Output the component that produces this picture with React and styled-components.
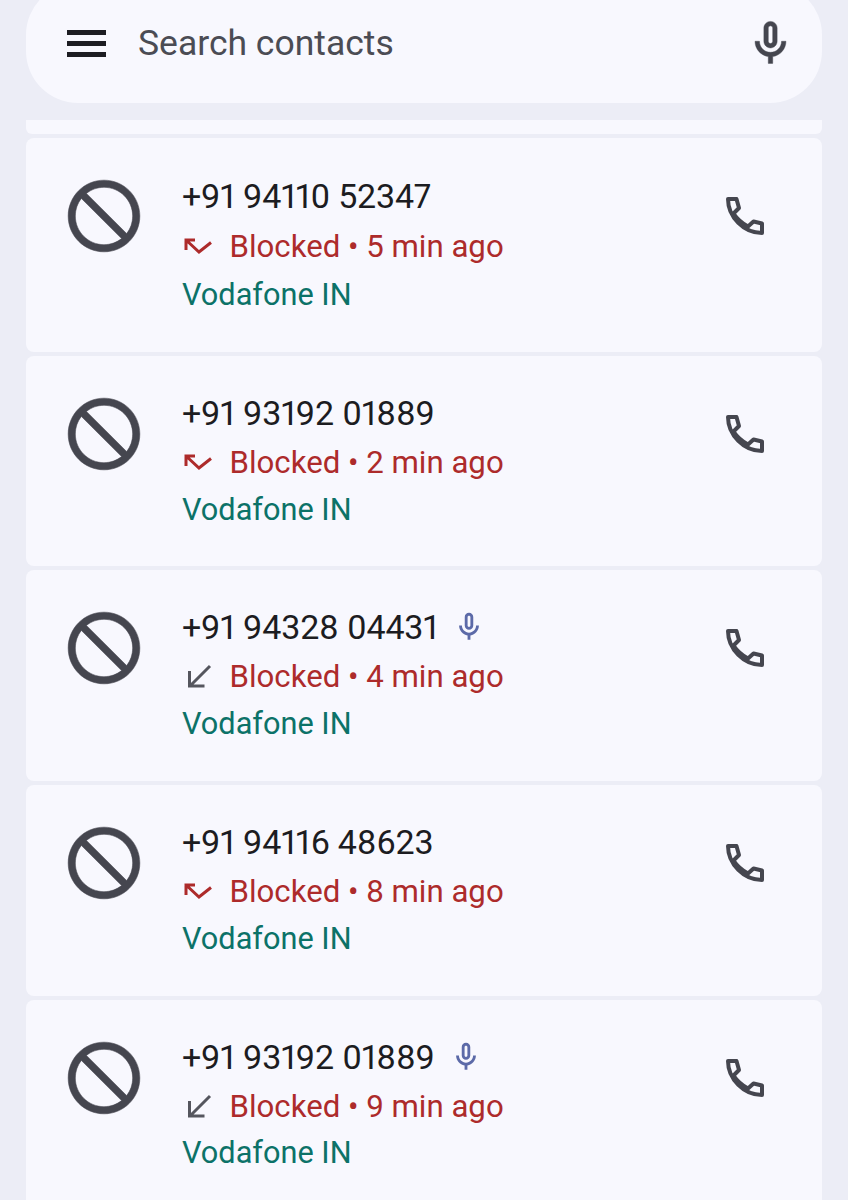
import React from "react"
import styled, { createGlobalStyle } from "styled-components"

const GlobalStyle = createGlobalStyle`
  html, body {
    margin: 0;
    background: #ecedf6;
    overflow: hidden;
  }
  body {
    font-family: Roboto, "Liberation Sans", sans-serif;
  }
`

const MIC = "M12 14c1.66 0 3-1.34 3-3V5c0-1.66-1.34-3-3-3S9 3.34 9 5v6c0 1.66 1.34 3 3 3zm-1-9c0-.55.45-1 1-1s1 .45 1 1v6c0 .55-.45 1-1 1s-1-.45-1-1V5zm6 6c0 2.76-2.24 5-5 5s-5-2.24-5-5H5c0 3.53 2.61 6.43 6 6.92V21h2v-3.08c3.39-.49 6-3.39 6-6.92h-2z"
const BLOCK = "M12 2C6.48 2 2 6.48 2 12s4.48 10 10 10 10-4.48 10-10S17.52 2 12 2zM4 12c0-4.42 3.58-8 8-8 1.85 0 3.55.63 4.9 1.69L5.69 16.9C4.63 15.55 4 13.85 4 12zm8 8c-1.85 0-3.55-.63-4.9-1.69L18.31 7.1C19.37 8.45 20 10.15 20 12c0 4.42-3.58 8-8 8z"

const calls = [
  { number: "+91 94110 52347", time: "5 min ago", height: 214, offset: 0, drop: 2, rise: 0 },
  { number: "+91 93192 01889", time: "2 min ago", height: 210, offset: -1, drop: 1, rise: 1 },
  { number: "+91 94328 04431", time: "4 min ago", height: 211, offset: -1, drop: 1, rise: 1, incoming: true, voicemail: true },
  { number: "+91 94116 48623", time: "8 min ago", height: 211, offset: -1, drop: 1, rise: 1 },
  { number: "+91 93192 01889", time: "9 min ago", height: 211, offset: -1, drop: 1, rise: 2, incoming: true, voicemail: true },
]

const Icon = ({ d, size, color, weight = 0 }) => (
  <svg width={size} height={size} viewBox="0 0 24 24" fill={color} stroke={color} strokeWidth={weight}>
    <path d={d} />
  </svg>
)

const Handset = () => (
  <svg width="42" height="42" viewBox="0 0 42 42" fill="none">
    <path
      d="M4 4 H12.5 L15 13 L9.5 18.5 Q14.5 26 24 31.5 L29.5 26.5 L38 28.5 V38 C20 38 4 22 4 4 Z"
      stroke="#45464f"
      strokeWidth="4"
      strokeLinejoin="round"
    />
  </svg>
)

// the red missed-call arrow, or the grey incoming one
const CallArrow = ({ incoming }) => (
  <svg width="34" height="30" viewBox="0 0 34 30" fill="none">
    {incoming ? (
      <path d="M28 4 L8 24 M7.5 9 V24 H22.5" stroke="#55565e" strokeWidth="3" />
    ) : (
      <path d="M3.5 7.5 L17 20 L29 10.5 M4 18 V8 H13" stroke="#ad2b2b" strokeWidth="3" />
    )}
  </svg>
)

const App = () => {
  return (
    <Page>
      <GlobalStyle />
      <SearchBar>
        <Burger>
          <span />
          <span />
          <span />
        </Burger>
        <SearchText>Search contacts</SearchText>
        <Icon d={MIC} size={53} color="#45464f" weight={0.2} />
      </SearchBar>
      <List>
        <Sliver />
        {calls.map((call, i) => (
          <Card key={i} $height={call.height}>
            <BlockSlot>
              <Icon d={BLOCK} size={86} color="#45464f" weight={0.15} />
            </BlockSlot>
            <Details $offset={call.offset}>
              <Number>
                {call.number}
                {call.voicemail && (
                  <VoicemailSlot>
                    <Icon d={MIC} size={34} color="#5c6aa8" />
                  </VoicemailSlot>
                )}
              </Number>
              <Status $drop={call.drop}>
                <ArrowSlot>
                  <CallArrow incoming={call.incoming} />
                </ArrowSlot>
                Blocked • {call.time}
              </Status>
              <Carrier $rise={call.rise}>Vodafone IN</Carrier>
            </Details>
            <CallSlot>
              <Handset />
            </CallSlot>
          </Card>
        ))}
      </List>
    </Page>
  )
}

const Page = styled.div`
  width: 848px;
  height: 1200px;
  overflow: hidden;
  padding: 0 26px;
  box-sizing: border-box;
`

const SearchBar = styled.div`
  display: flex;
  align-items: center;
  height: 120px;
  margin-top: -17px;
  padding: 0 25px 0 41px;
  box-sizing: border-box;
  border-radius: 52px;
  background: #f8f8fe;
`

const Burger = styled.div`
  display: flex;
  flex-direction: column;
  gap: 6px;
  width: 39px;

  span {
    height: 5px;
    background: #1d1d22;
  }
`

const SearchText = styled.div`
  flex: 1;
  margin-left: 32px;
  font-size: 35.5px;
  color: #4b4c54;
`

const List = styled.div`
  display: flex;
  flex-direction: column;
  gap: 4px;
  margin-top: 17px;
`

const Sliver = styled.div`
  height: 14px;
  background: #f8f8fe;
  border-radius: 0 0 6px 6px;
`

const Card = styled.div`
  display: flex;
  flex: none;
  align-items: flex-start;
  height: ${(p) => p.$height}px;
  background: #f8f8fe;
  border-radius: 8px;
`

const BlockSlot = styled.div`
  display: flex;
  margin: 35px 0 0 35px;
  transform: scaleX(-1);
`

const Details = styled.div`
  flex: 1;
  margin: ${(p) => 34 + p.$offset}px 0 0 35px;
`

const Number = styled.div`
  display: flex;
  align-items: center;
  height: 48px;
  font-size: 34px;
  font-variant-numeric: proportional-nums;
  letter-spacing: -0.2px;
  color: #1c1c21;
`

const VoicemailSlot = styled.span`
  display: flex;
  margin-left: 14px;
`

const Status = styled.div`
  display: flex;
  align-items: center;
  height: 49px;
  margin-top: ${(p) => p.$drop}px;
  font-size: 31.2px;
  color: #ad2b2b;
`

const ArrowSlot = styled.span`
  display: flex;
  width: 47.5px;
`

const Carrier = styled.div`
  display: flex;
  align-items: center;
  height: 47px;
  margin-top: ${(p) => -p.$rise}px;
  font-size: 30.7px;
  color: #0c7268;
`

const CallSlot = styled.div`
  display: flex;
  margin: 57px 56px 0 0;
`

export default App
